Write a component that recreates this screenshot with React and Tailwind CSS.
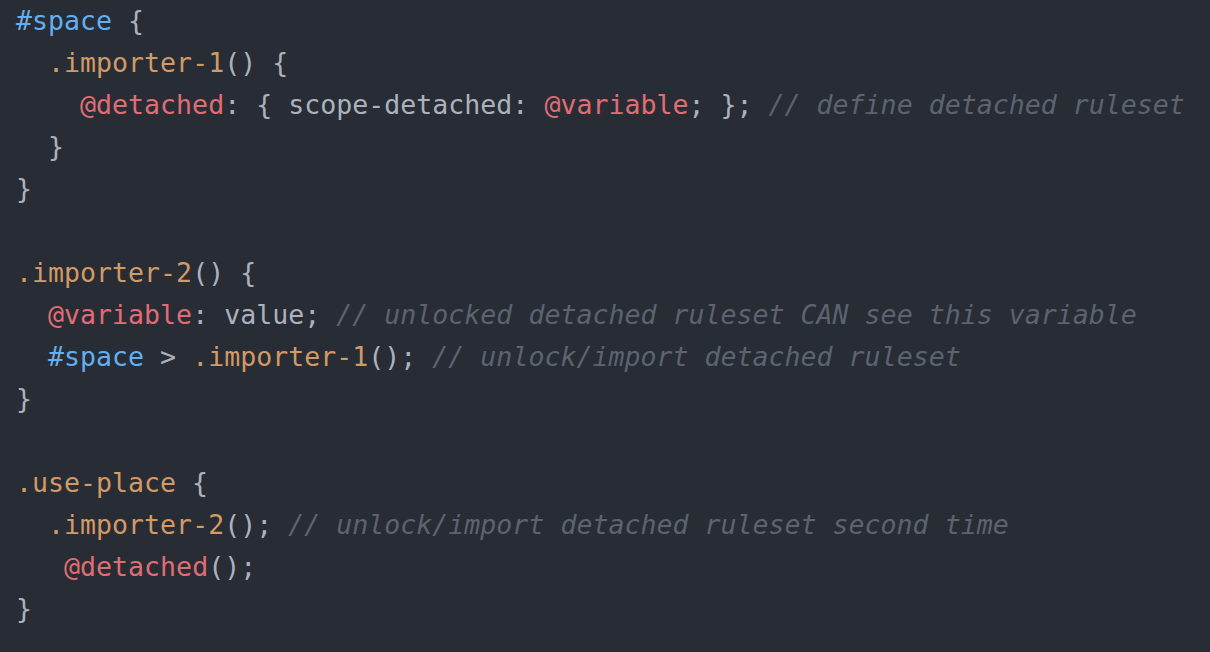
const B = ({ c }) => <span className="text-[#61afef]">{c}</span>;
const O = ({ c }) => <span className="text-[#d19a66]">{c}</span>;
const R = ({ c }) => <span className="text-[#e06c75]">{c}</span>;
const P = ({ c }) => <span className="text-[#abb2bf]">{c}</span>;
const C = ({ c }) => <span className="text-[#5c6370] italic">{c}</span>;

const lines = [
  [<B c="#space" />, <P c=" {" />],
  [<P c="  " />, <O c=".importer-1" />, <P c="() {" />],
  [<P c="    " />, <R c="@detached" />, <P c=": { scope-detached: " />, <R c="@variable" />, <P c="; }; " />, <C c="// define detached ruleset" />],
  [<P c="  }" />],
  [<P c="}" />],
  [<P c=" " />],
  [<O c=".importer-2" />, <P c="() {" />],
  [<P c="  " />, <R c="@variable" />, <P c=": value; " />, <C c="// unlocked detached ruleset CAN see this variable" />],
  [<P c="  " />, <B c="#space" />, <P c=" > " />, <O c=".importer-1" />, <P c="(); " />, <C c="// unlock/import detached ruleset" />],
  [<P c="}" />],
  [<P c=" " />],
  [<O c=".use-place" />, <P c=" {" />],
  [<P c="  " />, <O c=".importer-2" />, <P c="(); " />, <C c="// unlock/import detached ruleset second time" />],
  [<P c="   " />, <R c="@detached" />, <P c="();" />],
  [<P c="}" />],
];

export default function App() {
  return (
    <div className="w-[1210px] h-[652px] bg-[#282c34] overflow-hidden">
      <pre
        className="m-0 pl-4 pt-0 text-[26.6px] leading-[42px] whitespace-pre"
        style={{ fontFamily: '"DejaVu Sans Mono", "Liberation Mono", monospace' }}
      >
        {lines.map((l, i) => (
          <div key={i}>{l.map((s, j) => <span key={j}>{s}</span>)}</div>
        ))}
      </pre>
    </div>
  );
}
